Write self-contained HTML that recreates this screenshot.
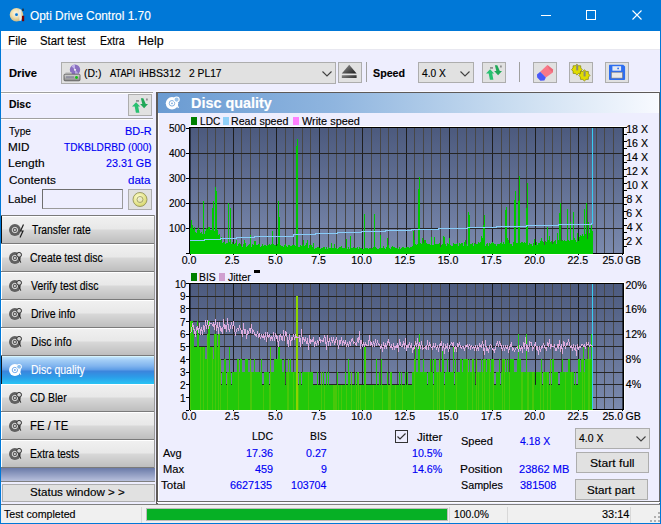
<!DOCTYPE html>
<html><head><meta charset="utf-8"><style>
html,body{margin:0;padding:0;}
body{width:661px;height:524px;overflow:hidden;position:relative;background:#EEEEFE;font-family:"Liberation Sans", sans-serif;}
.t{position:absolute;white-space:pre;line-height:1;font-family:"Liberation Sans", sans-serif;-webkit-text-stroke:0.15px currentColor;}
</style></head><body>
<div style="position:absolute;left:0px;top:0px;width:661px;height:31px;background:#0078D7"></div><svg style="position:absolute;left:6px;top:4px" width="22" height="22" viewBox="0 0 22 22">
<defs><radialGradient id="dg" cx="45%" cy="40%" r="60%"><stop offset="0" stop-color="#fffbe8"/><stop offset="0.5" stop-color="#efe0b0"/><stop offset="1" stop-color="#cdb880"/></radialGradient></defs>
<circle cx="10.5" cy="10.7" r="6.8" fill="url(#dg)"/><circle cx="10.5" cy="10.7" r="2.2" fill="#e8e4d8"/><circle cx="10.5" cy="10.7" r="1.4" fill="#0078D7"/>
<path d="M12.8 5.8L15.2 5.4L15.4 16.6L13.6 17Z" fill="#e8e8e8"/><rect x="16" y="11.8" width="2.2" height="5.4" fill="#7a0000"/><rect x="16.2" y="4.6" width="1.6" height="2.4" fill="#203040"/></svg><div class="t" style="left:29.82px;top:9.59px;transform-origin:0 0;transform:scaleX(0.9656);font-size:12.3px;color:#fff;font-weight:normal;">Opti Drive Control 1.70</div><div style="position:absolute;left:541px;top:15px;width:10px;height:1px;background:#fff"></div><div style="position:absolute;left:586px;top:10px;width:10px;height:10px;border:1px solid #fff;box-sizing:border-box"></div><svg style="position:absolute;left:632px;top:10px" width="10" height="10" viewBox="0 0 10 10"><path d="M0.5 0.5L9.5 9.5M9.5 0.5L0.5 9.5" stroke="#fff" stroke-width="1.1"/></svg><div style="position:absolute;left:0px;top:0px;width:1px;height:524px;background:#0078D7"></div><div style="position:absolute;left:660px;top:0px;width:1px;height:524px;background:#0078D7"></div><div style="position:absolute;left:0px;top:523px;width:661px;height:1px;background:#0078D7"></div><div style="position:absolute;left:1px;top:31px;width:659px;height:18px;background:#fff"></div><div class="t" style="left:7.56px;top:34.59px;transform-origin:0 0;transform:scaleX(0.9516);font-size:12.3px;color:#000;font-weight:normal;">File</div><div class="t" style="left:39.94px;top:34.59px;transform-origin:0 0;transform:scaleX(0.9251);font-size:12.3px;color:#000;font-weight:normal;">Start test</div><div class="t" style="left:99.66px;top:34.59px;transform-origin:0 0;transform:scaleX(0.8570);font-size:12.3px;color:#000;font-weight:normal;">Extra</div><div class="t" style="left:138.30px;top:34.59px;transform-origin:0 0;transform:scaleX(1.0139);font-size:12.3px;color:#000;font-weight:normal;">Help</div><div style="position:absolute;left:1px;top:49px;width:659px;height:43px;background:#EEEEFE"></div><div style="position:absolute;left:1px;top:49px;width:659px;height:1px;background:#e8e8f0"></div><div style="position:absolute;left:1px;top:91px;width:659px;height:1px;background:#f8f8ff"></div><div style="position:absolute;left:1px;top:92px;width:152px;height:1px;background:#A0A0A0"></div><div style="position:absolute;left:1px;top:93px;width:152px;height:1px;background:#fff"></div><div class="t" style="left:8.53px;top:67.77px;transform-origin:0 0;transform:scaleX(0.9721);font-size:11.5px;color:#000;font-weight:bold;">Drive</div><div style="position:absolute;left:61px;top:62px;width:275px;height:22px;background:#E1E1E1;border:1px solid #ADADAD;box-sizing:border-box"></div><svg style="position:absolute;left:62px;top:62px" width="22" height="22" viewBox="0 0 22 22">
<defs><linearGradient id="dvb" x1="0" y1="0" x2="0" y2="1"><stop offset="0" stop-color="#d8d8d8"/><stop offset="1" stop-color="#888"/></linearGradient></defs>
<circle cx="13" cy="7.8" r="5.2" fill="#8a70c0"/><path d="M13 7.8L9.5 4.2A5 5 0 0 1 13 2.6Z" fill="#c0b0e8"/><path d="M13 7.8L16.5 11.4A5 5 0 0 1 13 13Z" fill="#b8a8e0"/><circle cx="13" cy="7.8" r="1.1" fill="#f0f0f0"/>
<rect x="3.5" y="10" width="6" height="2.4" fill="#c8c8c8"/>
<rect x="2" y="12.2" width="16" height="6.6" rx="1" fill="url(#dvb)" stroke="#505050" stroke-width="0.8"/><rect x="4" y="14.2" width="8" height="2" fill="#9090a0"/><circle cx="14.5" cy="15.5" r="1.4" fill="#10c010"/></svg><div class="t" style="left:83.77px;top:68.27px;transform-origin:0 0;transform:scaleX(0.9071);font-size:11.5px;color:#000;font-weight:normal;">(D:)</div><div class="t" style="left:110.10px;top:68.27px;transform-origin:0 0;transform:scaleX(0.7996);font-size:11.5px;color:#000;font-weight:normal;">ATAPI</div><div class="t" style="left:139.07px;top:68.27px;transform-origin:0 0;transform:scaleX(0.9192);font-size:11.5px;color:#000;font-weight:normal;">iHBS312</div><div class="t" style="left:189.29px;top:68.27px;transform-origin:0 0;transform:scaleX(0.8941);font-size:11.5px;color:#000;font-weight:normal;">2 PL17</div><svg style="position:absolute;left:322px;top:71px" width="10" height="6" viewBox="0 0 10 6"><path d="M0.5 0.5L5 5L9.5 0.5" fill="none" stroke="#404040" stroke-width="1.1"/></svg><div style="position:absolute;left:338px;top:62px;width:24px;height:21px;background:#E1E1E1;border:1px solid #ADADAD;box-sizing:border-box"></div><svg style="position:absolute;left:338px;top:62px" width="24" height="21" viewBox="0 0 24 21">
<defs><linearGradient id="ej" x1="0" y1="0" x2="1" y2="1"><stop offset="0" stop-color="#9a9a9a"/><stop offset="1" stop-color="#181818"/></linearGradient></defs>
<path d="M11.2 2.7L18.6 11.6H3.8Z" fill="url(#ej)"/><rect x="3.8" y="13.1" width="14.8" height="2.8" fill="url(#ej)"/></svg><div style="position:absolute;left:366px;top:62px;width:1px;height:20px;background:#A0A0A0"></div><div class="t" style="left:372.89px;top:67.97px;transform-origin:0 0;transform:scaleX(0.9291);font-size:11.5px;color:#000;font-weight:bold;">Speed</div><div style="position:absolute;left:418px;top:62px;width:56px;height:21px;background:#E1E1E1;border:1px solid #ADADAD;box-sizing:border-box"></div><div class="t" style="left:421.90px;top:68.27px;transform-origin:0 0;transform:scaleX(0.8855);font-size:11.5px;color:#000;font-weight:normal;">4.0 X</div><svg style="position:absolute;left:460px;top:71px" width="10" height="6" viewBox="0 0 10 6"><path d="M0.5 0.5L5 5L9.5 0.5" fill="none" stroke="#404040" stroke-width="1.1"/></svg><div style="position:absolute;left:482px;top:62px;width:24px;height:21px;background:#E1E1E1;border:1px solid #ADADAD;box-sizing:border-box"></div><svg style="position:absolute;left:482px;top:62px" width="24" height="21" viewBox="0 0 24 21">
<path d="M4 11.4L8.1 7.2L12.1 11.4H10.2L11.4 17.8H7.9L6.7 11.4Z" fill="#28c070"/><path d="M12.1 9.1H14.3L12.9 3.2H15.3L17.8 9.1H20L16.1 13.3Z" fill="#20a858"/>
<rect x="8" y="5.5" width="3" height="0.9" fill="#404040"/><rect x="18.5" y="3.5" width="0.9" height="2" fill="#404040"/></svg><div style="position:absolute;left:519px;top:62px;width:1px;height:20px;background:#A0A0A0"></div><div style="position:absolute;left:533px;top:62px;width:24px;height:21px;background:#E1E1E1;border:1px solid #ADADAD;box-sizing:border-box"></div><svg style="position:absolute;left:533px;top:62px" width="24" height="21" viewBox="0 0 24 21">
<path d="M7.2 9.7L14.4 3L20.1 7.4L19.8 10.4L12.9 15.6Z" fill="#f87888"/><path d="M14.4 3L20.1 7.4L19.8 10.4L16 7Z" fill="#e05868" opacity="0.5"/>
<path d="M4 12.4L7.2 9.7L12.9 15.6L11.4 18.6L7.4 18.8L4.2 15.4Z" fill="#4a58f8"/></svg><div style="position:absolute;left:569px;top:62px;width:24px;height:21px;background:#E1E1E1;border:1px solid #ADADAD;box-sizing:border-box"></div><svg style="position:absolute;left:569px;top:62px" width="24" height="21" viewBox="0 0 24 21">
<polygon points="13.30,7.60 11.79,9.21 11.72,11.42 9.51,11.49 7.90,13.00 6.29,11.49 4.08,11.42 4.01,9.21 2.50,7.60 4.01,5.99 4.08,3.78 6.29,3.71 7.90,2.20 9.51,3.71 11.72,3.78 11.79,5.99" fill="#e0dc00" stroke="#707000" stroke-width="0.6"/><polygon points="21.00,13.40 19.44,15.07 19.36,17.36 17.07,17.44 15.40,19.00 13.73,17.44 11.44,17.36 11.36,15.07 9.80,13.40 11.36,11.73 11.44,9.44 13.73,9.36 15.40,7.80 17.07,9.36 19.36,9.44 19.44,11.73" fill="#e0dc00" stroke="#707000" stroke-width="0.6"/>
<rect x="7.2" y="3.2" width="2" height="5.2" fill="#8a8a7a"/><rect x="14.6" y="9.2" width="2" height="5.2" fill="#8a8a7a"/></svg><div style="position:absolute;left:605px;top:62px;width:24px;height:21px;background:#E1E1E1;border:1px solid #ADADAD;box-sizing:border-box"></div><svg style="position:absolute;left:605px;top:62px" width="24" height="21" viewBox="0 0 24 21">
<path d="M4.5 2.7H18.2L20.1 4.6V17Q20.1 17.9 19.2 17.9H4.9Q4 17.9 4 17V3.2Q4 2.7 4.5 2.7Z" fill="#2e6ef0"/>
<rect x="7.4" y="4.2" width="8.7" height="4.5" fill="#e4eaf4"/><circle cx="13.1" cy="6.4" r="0.9" fill="#2e6ef0"/>
<rect x="6.4" y="10.2" width="11" height="5.9" fill="#e8e8e8" stroke="#7a7a80" stroke-width="0.6"/></svg><div style="position:absolute;left:1px;top:94px;width:155px;height:410px;background:#EEEEFE"></div><div class="t" style="left:8.58px;top:99.27px;transform-origin:0 0;transform:scaleX(0.9013);font-size:11.5px;color:#000;font-weight:bold;">Disc</div><div style="position:absolute;left:128px;top:94px;width:24px;height:22px;background:#E1E1E1;border:1px solid #ADADAD;box-sizing:border-box"></div><svg style="position:absolute;left:128px;top:95px" width="24" height="21" viewBox="0 0 24 21">
<path d="M4 11.4L8.1 7.2L12.1 11.4H10.2L11.4 17.8H7.9L6.7 11.4Z" fill="#28c070"/><path d="M12.1 9.1H14.3L12.9 3.2H15.3L17.8 9.1H20L16.1 13.3Z" fill="#20a858"/>
<rect x="8" y="5.5" width="3" height="0.9" fill="#404040"/><rect x="18.5" y="3.5" width="0.9" height="2" fill="#404040"/></svg><div style="position:absolute;left:1px;top:118px;width:152px;height:1px;background:#A0A0A0"></div><div style="position:absolute;left:1px;top:119px;width:152px;height:1px;background:#fff"></div><div class="t" style="left:9.10px;top:125.87px;transform-origin:0 0;transform:scaleX(0.8771);font-size:11.5px;color:#000;font-weight:normal;">Type</div><div class="t" style="left:124.72px;top:125.87px;transform-origin:0 0;transform:scaleX(0.9511);font-size:11.5px;color:#0000f4;font-weight:normal;">BD-R</div><div class="t" style="left:8.36px;top:141.77px;transform-origin:0 0;transform:scaleX(1.0165);font-size:11.5px;color:#000;font-weight:normal;">MID</div><div class="t" style="left:63.90px;top:141.77px;transform-origin:0 0;transform:scaleX(0.8791);font-size:11.5px;color:#0000f4;font-weight:normal;">TDKBLDRBD (000)</div><div class="t" style="left:8.34px;top:158.27px;transform-origin:0 0;transform:scaleX(1.0444);font-size:11.5px;color:#000;font-weight:normal;">Length</div><div class="t" style="left:106.16px;top:158.27px;transform-origin:0 0;transform:scaleX(0.9332);font-size:11.5px;color:#0000f4;font-weight:normal;">23.31 GB</div><div class="t" style="left:8.71px;top:174.57px;transform-origin:0 0;transform:scaleX(1.0176);font-size:11.5px;color:#000;font-weight:normal;">Contents</div><div class="t" style="left:128.44px;top:174.57px;transform-origin:0 0;transform:scaleX(1.0061);font-size:11.5px;color:#0000f4;font-weight:normal;">data</div><div class="t" style="left:8.39px;top:193.87px;transform-origin:0 0;transform:scaleX(0.9923);font-size:11.5px;color:#000;font-weight:normal;">Label</div><div style="position:absolute;left:42px;top:189px;width:81px;height:20px;background:#EEEEFE;border:1px solid #6e6e6e;border-bottom-color:#9a9a9a;border-right-color:#9a9a9a;box-sizing:border-box"></div><div style="position:absolute;left:128px;top:189px;width:24px;height:21px;background:#E1E1E1;border:1px solid #ADADAD;box-sizing:border-box"></div><svg style="position:absolute;left:128px;top:189px" width="24" height="21" viewBox="0 0 24 21">
<defs><radialGradient id="cdy" cx="40%" cy="35%" r="65%"><stop offset="0" stop-color="#ffffd0"/><stop offset="1" stop-color="#d8d870"/></radialGradient></defs>
<circle cx="12" cy="10.5" r="7" fill="url(#cdy)" stroke="#8a8a50" stroke-width="0.8"/><circle cx="12" cy="10.5" r="3" fill="none" stroke="#9a9a70" stroke-width="0.9"/><circle cx="12" cy="10.5" r="1.3" fill="#e0e0e0"/></svg><div style="position:absolute;left:1px;top:215px;width:154px;height:1px;background:#7a7a7a"></div><div style="position:absolute;left:1px;top:216px;width:154px;height:1px;background:#fff"></div><div style="position:absolute;left:1px;top:217px;width:154px;height:26px;background:linear-gradient(#f0f0f0 0px,#e8e8e8 12px,#d8d8d8 13px,#bebebe 26px)"></div><div style="position:absolute;left:1px;top:216px;width:1px;height:27px;background:#101010"></div><svg style="position:absolute;left:4px;top:221px" width="22" height="18" viewBox="0 0 22 18">
<circle cx="10.9" cy="9" r="5.9" fill="#606060"/><circle cx="10.9" cy="9" r="2.7" fill="none" stroke="#e6e6e6" stroke-width="0.9"/><circle cx="10.9" cy="9" r="0.9" fill="#e6e6e6"/><path d="M19.5 3.5L16.5 10H19L16 16.5" fill="none" stroke="#202020" stroke-width="1.2"/></svg><div class="t" style="left:31.89px;top:223.89px;transform-origin:0 0;transform:scaleX(0.8389);font-size:12.3px;color:#000;font-weight:normal;">Transfer rate</div><div style="position:absolute;left:1px;top:243px;width:154px;height:1px;background:#7a7a7a"></div><div style="position:absolute;left:1px;top:244px;width:154px;height:1px;background:#fff"></div><div style="position:absolute;left:1px;top:245px;width:154px;height:26px;background:linear-gradient(#f0f0f0 0px,#e8e8e8 12px,#d8d8d8 13px,#bebebe 26px)"></div><div style="position:absolute;left:1px;top:244px;width:1px;height:27px;background:#fff"></div><svg style="position:absolute;left:4px;top:249px" width="22" height="18" viewBox="0 0 22 18">
<circle cx="10.9" cy="9" r="5.9" fill="#606060"/><circle cx="10.9" cy="9" r="2.7" fill="none" stroke="#e6e6e6" stroke-width="0.9"/><circle cx="10.9" cy="9" r="0.9" fill="#e6e6e6"/><circle cx="15.1" cy="5.8" r="2.4" fill="#d4d4d4" stroke="#303030" stroke-width="1"/><path d="M14.6 8.6L16.8 13.6" stroke="#303030" stroke-width="1.1"/></svg><div class="t" style="left:30.48px;top:251.89px;transform-origin:0 0;transform:scaleX(0.8523);font-size:12.3px;color:#000;font-weight:normal;">Create test disc</div><div style="position:absolute;left:1px;top:271px;width:154px;height:1px;background:#7a7a7a"></div><div style="position:absolute;left:1px;top:272px;width:154px;height:1px;background:#fff"></div><div style="position:absolute;left:1px;top:273px;width:154px;height:26px;background:linear-gradient(#f0f0f0 0px,#e8e8e8 12px,#d8d8d8 13px,#bebebe 26px)"></div><div style="position:absolute;left:1px;top:272px;width:1px;height:27px;background:#fff"></div><svg style="position:absolute;left:4px;top:277px" width="22" height="18" viewBox="0 0 22 18">
<circle cx="10.9" cy="9" r="5.9" fill="#606060"/><circle cx="10.9" cy="9" r="2.7" fill="none" stroke="#e6e6e6" stroke-width="0.9"/><circle cx="10.9" cy="9" r="0.9" fill="#e6e6e6"/><circle cx="15.1" cy="5.8" r="2.4" fill="#d4d4d4" stroke="#303030" stroke-width="1"/><path d="M14.6 8.6L16.8 13.6" stroke="#303030" stroke-width="1.1"/></svg><div class="t" style="left:31.00px;top:279.89px;transform-origin:0 0;transform:scaleX(0.8501);font-size:12.3px;color:#000;font-weight:normal;">Verify test disc</div><div style="position:absolute;left:1px;top:299px;width:154px;height:1px;background:#7a7a7a"></div><div style="position:absolute;left:1px;top:300px;width:154px;height:1px;background:#fff"></div><div style="position:absolute;left:1px;top:301px;width:154px;height:26px;background:linear-gradient(#f0f0f0 0px,#e8e8e8 12px,#d8d8d8 13px,#bebebe 26px)"></div><div style="position:absolute;left:1px;top:300px;width:1px;height:27px;background:#fff"></div><svg style="position:absolute;left:4px;top:305px" width="22" height="18" viewBox="0 0 22 18">
<circle cx="10.9" cy="9" r="5.9" fill="#606060"/><circle cx="10.9" cy="9" r="2.7" fill="none" stroke="#e6e6e6" stroke-width="0.9"/><circle cx="10.9" cy="9" r="0.9" fill="#e6e6e6"/><circle cx="15.1" cy="5.8" r="2.4" fill="#d4d4d4" stroke="#303030" stroke-width="1"/><path d="M14.6 8.6L16.8 13.6" stroke="#303030" stroke-width="1.1"/></svg><div class="t" style="left:30.86px;top:307.89px;transform-origin:0 0;transform:scaleX(0.8551);font-size:12.3px;color:#000;font-weight:normal;">Drive info</div><div style="position:absolute;left:1px;top:327px;width:154px;height:1px;background:#7a7a7a"></div><div style="position:absolute;left:1px;top:328px;width:154px;height:1px;background:#fff"></div><div style="position:absolute;left:1px;top:329px;width:154px;height:26px;background:linear-gradient(#f0f0f0 0px,#e8e8e8 12px,#d8d8d8 13px,#bebebe 26px)"></div><div style="position:absolute;left:1px;top:328px;width:1px;height:27px;background:#fff"></div><svg style="position:absolute;left:4px;top:333px" width="22" height="18" viewBox="0 0 22 18">
<circle cx="10.9" cy="9" r="5.9" fill="#606060"/><circle cx="10.9" cy="9" r="2.7" fill="none" stroke="#e6e6e6" stroke-width="0.9"/><circle cx="10.9" cy="9" r="0.9" fill="#e6e6e6"/><circle cx="15.1" cy="5.8" r="2.4" fill="#d4d4d4" stroke="#303030" stroke-width="1"/><path d="M14.6 8.6L16.8 13.6" stroke="#303030" stroke-width="1.1"/></svg><div class="t" style="left:30.65px;top:335.89px;transform-origin:0 0;transform:scaleX(0.8593);font-size:12.3px;color:#000;font-weight:normal;">Disc info</div><div style="position:absolute;left:1px;top:355px;width:154px;height:1px;background:#7a7a7a"></div><div style="position:absolute;left:1px;top:356px;width:154px;height:1px;background:#d8f4fc"></div><div style="position:absolute;left:1px;top:357px;width:154px;height:27px;background:linear-gradient(#c0e4fc 0px,#a4cef6 3px,#80b4ee 9px,#5c9ce6 13px,#3c84dc 14px,#2c9ce8 20px,#28c4f4 27px)"></div><div style="position:absolute;left:1px;top:356px;width:1px;height:28px;background:#101820"></div><svg style="position:absolute;left:4px;top:361px" width="22" height="18" viewBox="0 0 22 18">
<circle cx="10.9" cy="9" r="5.9" fill="#ffffff"/><circle cx="10.9" cy="9" r="2.7" fill="none" stroke="#6aa6ea" stroke-width="0.9"/><circle cx="10.9" cy="9" r="0.9" fill="#6aa6ea"/><circle cx="15.1" cy="5.8" r="2.4" fill="#8cc0f0" stroke="#ffffff" stroke-width="1"/><path d="M14.6 8.6L16.8 13.6" stroke="#ffffff" stroke-width="1.1"/></svg><div class="t" style="left:30.66px;top:363.89px;transform-origin:0 0;transform:scaleX(0.8562);font-size:12.3px;color:#fff;font-weight:normal;">Disc quality</div><div style="position:absolute;left:1px;top:384px;width:154px;height:1px;background:#fff"></div><div style="position:absolute;left:1px;top:385px;width:154px;height:26px;background:linear-gradient(#f0f0f0 0px,#e8e8e8 12px,#d8d8d8 13px,#bebebe 26px)"></div><div style="position:absolute;left:1px;top:384px;width:1px;height:27px;background:#fff"></div><svg style="position:absolute;left:4px;top:389px" width="22" height="18" viewBox="0 0 22 18">
<circle cx="10.9" cy="9" r="5.9" fill="#606060"/><circle cx="10.9" cy="9" r="2.7" fill="none" stroke="#e6e6e6" stroke-width="0.9"/><circle cx="10.9" cy="9" r="0.9" fill="#e6e6e6"/><circle cx="15.1" cy="5.8" r="2.4" fill="#d4d4d4" stroke="#303030" stroke-width="1"/><path d="M14.6 8.6L16.8 13.6" stroke="#303030" stroke-width="1.1"/></svg><div class="t" style="left:30.18px;top:391.89px;transform-origin:0 0;transform:scaleX(0.8514);font-size:12.3px;color:#000;font-weight:normal;">CD Bler</div><div style="position:absolute;left:1px;top:411px;width:154px;height:1px;background:#7a7a7a"></div><div style="position:absolute;left:1px;top:412px;width:154px;height:1px;background:#fff"></div><div style="position:absolute;left:1px;top:413px;width:154px;height:26px;background:linear-gradient(#f0f0f0 0px,#e8e8e8 12px,#d8d8d8 13px,#bebebe 26px)"></div><div style="position:absolute;left:1px;top:412px;width:1px;height:27px;background:#fff"></div><svg style="position:absolute;left:4px;top:417px" width="22" height="18" viewBox="0 0 22 18">
<circle cx="10.9" cy="9" r="5.9" fill="#606060"/><circle cx="10.9" cy="9" r="2.7" fill="none" stroke="#e6e6e6" stroke-width="0.9"/><circle cx="10.9" cy="9" r="0.9" fill="#e6e6e6"/><circle cx="15.1" cy="5.8" r="2.4" fill="#d4d4d4" stroke="#303030" stroke-width="1"/><path d="M14.6 8.6L16.8 13.6" stroke="#303030" stroke-width="1.1"/></svg><div class="t" style="left:30.39px;top:419.89px;transform-origin:0 0;transform:scaleX(0.9243);font-size:12.3px;color:#000;font-weight:normal;">FE / TE</div><div style="position:absolute;left:1px;top:439px;width:154px;height:1px;background:#7a7a7a"></div><div style="position:absolute;left:1px;top:440px;width:154px;height:1px;background:#fff"></div><div style="position:absolute;left:1px;top:441px;width:154px;height:26px;background:linear-gradient(#f0f0f0 0px,#e8e8e8 12px,#d8d8d8 13px,#bebebe 26px)"></div><div style="position:absolute;left:1px;top:440px;width:1px;height:27px;background:#fff"></div><svg style="position:absolute;left:4px;top:445px" width="22" height="18" viewBox="0 0 22 18">
<circle cx="10.9" cy="9" r="5.9" fill="#606060"/><circle cx="10.9" cy="9" r="2.7" fill="none" stroke="#e6e6e6" stroke-width="0.9"/><circle cx="10.9" cy="9" r="0.9" fill="#e6e6e6"/><circle cx="15.1" cy="5.8" r="2.4" fill="#d4d4d4" stroke="#303030" stroke-width="1"/><path d="M14.6 8.6L16.8 13.6" stroke="#303030" stroke-width="1.1"/></svg><div class="t" style="left:30.47px;top:447.89px;transform-origin:0 0;transform:scaleX(0.8458);font-size:12.3px;color:#000;font-weight:normal;">Extra tests</div><div style="position:absolute;left:1px;top:467px;width:154px;height:1px;background:#7a7a7a"></div><div style="position:absolute;left:1px;top:468px;width:154px;height:13px;background:linear-gradient(#6a7aa8,#b8c0dc)"></div><div style="position:absolute;left:1px;top:481px;width:154px;height:1px;background:#808080"></div><div style="position:absolute;left:2px;top:484px;width:153px;height:18px;background:#E1E1E1;border:1px solid #ADADAD;box-sizing:border-box"></div><div class="t" style="left:29.84px;top:487.27px;transform-origin:0 0;transform:scaleX(1.0096);font-size:11.5px;color:#000;font-weight:normal;">Status window &gt; &gt;</div><div style="position:absolute;left:154px;top:215px;width:1px;height:253px;background:#9a9a9a"></div><div style="position:absolute;left:158px;top:93px;width:502px;height:411px;background:#EEEEFE"></div><div style="position:absolute;left:156px;top:92px;width:504px;height:1px;background:#5e5a58"></div><div style="position:absolute;left:156px;top:92px;width:2px;height:412px;background:#5e5a58"></div><div style="position:absolute;left:158px;top:113px;width:1px;height:388px;background:#ffffff"></div><div style="position:absolute;left:158px;top:93px;width:500px;height:20px;background:linear-gradient(90deg,#6a9bd2 0%,#8fb5df 35%,#c8dcf0 70%,#f8faff 100%)"></div><div style="position:absolute;left:659px;top:92px;width:1px;height:412px;background:#6a6a6a"></div><div style="position:absolute;left:658px;top:93px;width:1px;height:20px;background:#ffffff"></div><svg style="position:absolute;left:162px;top:94px" width="22" height="18" viewBox="0 0 22 18">
<circle cx="10" cy="9.3" r="6.2" fill="#ffffff"/><circle cx="10" cy="9.3" r="2.8" fill="none" stroke="#7aaadc" stroke-width="0.9"/><circle cx="10" cy="9.3" r="0.9" fill="#7aaadc"/>
<circle cx="14.6" cy="5.6" r="2.6" fill="#9cc4ea" stroke="#ffffff" stroke-width="1.1"/><path d="M14 8.6L16.4 14" stroke="#ffffff" stroke-width="1.2"/></svg><div class="t" style="left:190.84px;top:96.15px;transform-origin:0 0;transform:scaleX(1.0284);font-size:14px;color:#fff;font-weight:bold;">Disc quality</div><div style="position:absolute;left:157px;top:501px;width:503px;height:1px;background:#6a6a6a"></div><div style="position:absolute;left:157px;top:502px;width:503px;height:1px;background:#fff"></div><div style="position:absolute;left:1px;top:504px;width:659px;height:1px;background:#808080"></div><svg style="position:absolute;left:0;top:0" width="661" height="524" viewBox="0 0 661 524" shape-rendering="crispEdges"><defs>
<linearGradient id="pg1" x1="0" y1="0" x2="0" y2="1"><stop offset="0" stop-color="#4c5a7e"/><stop offset="1" stop-color="#7b8aae"/></linearGradient>
<linearGradient id="pg2" x1="0" y1="0" x2="0" y2="1"><stop offset="0" stop-color="#4a5778"/><stop offset="1" stop-color="#7a89ab"/></linearGradient>
</defs><rect x="189" y="126" width="436" height="1" fill="#ffffff"/><rect x="189" y="254" width="436" height="1" fill="#ffffff"/><rect x="624" y="127" width="1" height="127" fill="#ffffff"/><rect x="190" y="128" width="433" height="125" fill="url(#pg1)"/><rect x="198" y="128" width="1" height="125" fill="#474747"/><rect x="207" y="128" width="1" height="125" fill="#474747"/><rect x="215" y="128" width="1" height="125" fill="#474747"/><rect x="224" y="128" width="1" height="125" fill="#474747"/><rect x="233" y="128" width="1" height="125" fill="#1e1e1e"/><rect x="241" y="128" width="1" height="125" fill="#474747"/><rect x="250" y="128" width="1" height="125" fill="#474747"/><rect x="259" y="128" width="1" height="125" fill="#474747"/><rect x="267" y="128" width="1" height="125" fill="#474747"/><rect x="276" y="128" width="1" height="125" fill="#1e1e1e"/><rect x="285" y="128" width="1" height="125" fill="#474747"/><rect x="293" y="128" width="1" height="125" fill="#474747"/><rect x="302" y="128" width="1" height="125" fill="#474747"/><rect x="310" y="128" width="1" height="125" fill="#474747"/><rect x="319" y="128" width="1" height="125" fill="#1e1e1e"/><rect x="328" y="128" width="1" height="125" fill="#474747"/><rect x="336" y="128" width="1" height="125" fill="#474747"/><rect x="345" y="128" width="1" height="125" fill="#474747"/><rect x="354" y="128" width="1" height="125" fill="#474747"/><rect x="362" y="128" width="1" height="125" fill="#1e1e1e"/><rect x="371" y="128" width="1" height="125" fill="#474747"/><rect x="380" y="128" width="1" height="125" fill="#474747"/><rect x="388" y="128" width="1" height="125" fill="#474747"/><rect x="397" y="128" width="1" height="125" fill="#474747"/><rect x="406" y="128" width="1" height="125" fill="#1e1e1e"/><rect x="414" y="128" width="1" height="125" fill="#474747"/><rect x="423" y="128" width="1" height="125" fill="#474747"/><rect x="431" y="128" width="1" height="125" fill="#474747"/><rect x="440" y="128" width="1" height="125" fill="#474747"/><rect x="449" y="128" width="1" height="125" fill="#1e1e1e"/><rect x="457" y="128" width="1" height="125" fill="#474747"/><rect x="466" y="128" width="1" height="125" fill="#474747"/><rect x="475" y="128" width="1" height="125" fill="#474747"/><rect x="483" y="128" width="1" height="125" fill="#474747"/><rect x="492" y="128" width="1" height="125" fill="#1e1e1e"/><rect x="501" y="128" width="1" height="125" fill="#474747"/><rect x="509" y="128" width="1" height="125" fill="#474747"/><rect x="518" y="128" width="1" height="125" fill="#474747"/><rect x="526" y="128" width="1" height="125" fill="#474747"/><rect x="535" y="128" width="1" height="125" fill="#1e1e1e"/><rect x="544" y="128" width="1" height="125" fill="#474747"/><rect x="552" y="128" width="1" height="125" fill="#474747"/><rect x="561" y="128" width="1" height="125" fill="#474747"/><rect x="570" y="128" width="1" height="125" fill="#474747"/><rect x="578" y="128" width="1" height="125" fill="#1e1e1e"/><rect x="587" y="128" width="1" height="125" fill="#474747"/><rect x="596" y="128" width="1" height="125" fill="#474747"/><rect x="604" y="128" width="1" height="125" fill="#474747"/><rect x="613" y="128" width="1" height="125" fill="#474747"/><rect x="190" y="228" width="433" height="1" fill="#252525"/><rect x="190" y="203" width="433" height="1" fill="#252525"/><rect x="190" y="178" width="433" height="1" fill="#252525"/><rect x="190" y="153" width="433" height="1" fill="#252525"/><rect x="189" y="127" width="435" height="1" fill="#000"/><rect x="189" y="253" width="435" height="1" fill="#000"/><rect x="189" y="127" width="1" height="127" fill="#000"/><rect x="190" y="127" width="1" height="127" fill="#000" fill-opacity="0.55"/><rect x="623" y="127" width="1" height="127" fill="#000"/><rect x="622" y="127" width="1" height="127" fill="#000" fill-opacity="0.55"/><rect x="186" y="253" width="3" height="1" fill="#000"/><rect x="186" y="228" width="3" height="1" fill="#000"/><rect x="186" y="203" width="3" height="1" fill="#000"/><rect x="186" y="178" width="3" height="1" fill="#000"/><rect x="186" y="153" width="3" height="1" fill="#000"/><rect x="186" y="128" width="3" height="1" fill="#000"/><rect x="624" y="246" width="3" height="1" fill="#000"/><rect x="624" y="239" width="3" height="1" fill="#000"/><rect x="624" y="232" width="3" height="1" fill="#000"/><rect x="624" y="225" width="3" height="1" fill="#000"/><rect x="624" y="218" width="3" height="1" fill="#000"/><rect x="624" y="211" width="3" height="1" fill="#000"/><rect x="624" y="204" width="3" height="1" fill="#000"/><rect x="624" y="197" width="3" height="1" fill="#000"/><rect x="624" y="190" width="3" height="1" fill="#000"/><rect x="624" y="183" width="3" height="1" fill="#000"/><rect x="624" y="176" width="3" height="1" fill="#000"/><rect x="624" y="169" width="3" height="1" fill="#000"/><rect x="624" y="162" width="3" height="1" fill="#000"/><rect x="624" y="155" width="3" height="1" fill="#000"/><rect x="624" y="148" width="3" height="1" fill="#000"/><rect x="624" y="141" width="3" height="1" fill="#000"/><rect x="624" y="134" width="3" height="1" fill="#000"/><rect x="624" y="127" width="3" height="1" fill="#000"/><path d="M190 228.3V254h1V228.3ZM191 219.9V254h1V219.9ZM192 224.9V254h1V224.9ZM193 228.5V254h1V228.5ZM194 227.2V254h1V227.2ZM195 231.6V254h1V231.6ZM196 232.7V254h1V232.7ZM197 229.6V254h1V229.6ZM198 228.2V254h1V228.2ZM199 230.1V254h1V230.1ZM200 232.8V254h1V232.8ZM201 231.6V254h1V231.6ZM202 234.0V254h1V234.0ZM203 201.0V254h1V201.0ZM204 234.3V254h1V234.3ZM205 230.9V254h1V230.9ZM206 228.0V254h1V228.0ZM207 229.0V254h1V229.0ZM208 226.7V254h1V226.7ZM209 227.4V254h1V227.4ZM210 230.2V254h1V230.2ZM211 230.2V254h1V230.2ZM212 208.0V254h1V208.0ZM213 201.0V254h1V201.0ZM214 230.8V254h1V230.8ZM215 187.0V254h1V187.0ZM216 191.0V254h1V191.0ZM217 230.3V254h1V230.3ZM218 234.6V254h1V234.6ZM219 233.5V254h1V233.5ZM220 238.6V254h1V238.6ZM221 236.5V254h1V236.5ZM222 243.3V254h1V243.3ZM223 241.8V254h1V241.8ZM224 241.8V254h1V241.8ZM225 244.0V254h1V244.0ZM226 242.7V254h1V242.7ZM227 243.1V254h1V243.1ZM228 203.0V254h1V203.0ZM229 241.5V254h1V241.5ZM230 208.0V254h1V208.0ZM231 243.6V254h1V243.6ZM232 242.2V254h1V242.2ZM233 244.2V254h1V244.2ZM234 244.0V254h1V244.0ZM235 242.9V254h1V242.9ZM236 240.3V254h1V240.3ZM237 245.9V254h1V245.9ZM238 244.0V254h1V244.0ZM239 242.7V254h1V242.7ZM240 243.7V254h1V243.7ZM241 245.8V254h1V245.8ZM242 246.5V254h1V246.5ZM243 243.5V254h1V243.5ZM244 240.0V254h1V240.0ZM245 243.4V254h1V243.4ZM246 246.8V254h1V246.8ZM247 246.3V254h1V246.3ZM248 244.9V254h1V244.9ZM249 244.2V254h1V244.2ZM250 235.0V254h1V235.0ZM251 246.6V254h1V246.6ZM252 243.8V254h1V243.8ZM253 245.0V254h1V245.0ZM254 240.9V254h1V240.9ZM255 241.4V254h1V241.4ZM256 244.9V254h1V244.9ZM257 245.4V254h1V245.4ZM258 243.9V254h1V243.9ZM259 244.4V254h1V244.4ZM260 247.2V254h1V247.2ZM261 245.7V254h1V245.7ZM262 244.4V254h1V244.4ZM263 245.8V254h1V245.8ZM264 244.9V254h1V244.9ZM265 245.2V254h1V245.2ZM266 245.7V254h1V245.7ZM267 244.5V254h1V244.5ZM268 244.5V254h1V244.5ZM269 244.4V254h1V244.4ZM270 245.3V254h1V245.3ZM271 244.2V254h1V244.2ZM272 231.0V254h1V231.0ZM273 244.3V254h1V244.3ZM274 244.8V254h1V244.8ZM275 244.9V254h1V244.9ZM276 245.9V254h1V245.9ZM277 244.1V254h1V244.1ZM278 201.0V254h1V201.0ZM279 217.0V254h1V217.0ZM280 245.2V254h1V245.2ZM281 245.9V254h1V245.9ZM282 246.0V254h1V246.0ZM283 247.0V254h1V247.0ZM284 245.2V254h1V245.2ZM285 244.4V254h1V244.4ZM286 246.1V254h1V246.1ZM287 247.4V254h1V247.4ZM288 244.5V254h1V244.5ZM289 245.3V254h1V245.3ZM290 245.6V254h1V245.6ZM291 245.8V254h1V245.8ZM292 244.7V254h1V244.7ZM293 244.6V254h1V244.6ZM294 245.1V254h1V245.1ZM295 246.0V254h1V246.0ZM296 146.0V254h1V146.0ZM297 139.0V254h1V139.0ZM298 247.3V254h1V247.3ZM299 247.3V254h1V247.3ZM300 245.1V254h1V245.1ZM301 245.7V254h1V245.7ZM302 244.5V254h1V244.5ZM303 239.8V254h1V239.8ZM304 246.2V254h1V246.2ZM305 245.3V254h1V245.3ZM306 242.6V254h1V242.6ZM307 240.0V254h1V240.0ZM308 247.7V254h1V247.7ZM309 245.2V254h1V245.2ZM310 245.2V254h1V245.2ZM311 244.9V254h1V244.9ZM312 247.4V254h1V247.4ZM313 243.2V254h1V243.2ZM314 249.2V254h1V249.2ZM315 247.9V254h1V247.9ZM316 247.7V254h1V247.7ZM317 247.4V254h1V247.4ZM318 247.4V254h1V247.4ZM319 248.3V254h1V248.3ZM320 249.1V254h1V249.1ZM321 247.6V254h1V247.6ZM322 247.9V254h1V247.9ZM323 247.3V254h1V247.3ZM324 247.2V254h1V247.2ZM325 248.9V254h1V248.9ZM326 247.3V254h1V247.3ZM327 248.9V254h1V248.9ZM328 247.1V254h1V247.1ZM329 247.7V254h1V247.7ZM330 248.0V254h1V248.0ZM331 243.0V254h1V243.0ZM332 248.3V254h1V248.3ZM333 247.7V254h1V247.7ZM334 244.1V254h1V244.1ZM335 248.3V254h1V248.3ZM336 248.2V254h1V248.2ZM337 249.2V254h1V249.2ZM338 247.7V254h1V247.7ZM339 247.3V254h1V247.3ZM340 247.2V254h1V247.2ZM341 245.6V254h1V245.6ZM342 247.7V254h1V247.7ZM343 247.5V254h1V247.5ZM344 247.7V254h1V247.7ZM345 247.7V254h1V247.7ZM346 239.0V254h1V239.0ZM347 248.9V254h1V248.9ZM348 247.2V254h1V247.2ZM349 249.0V254h1V249.0ZM350 235.6V254h1V235.6ZM351 248.3V254h1V248.3ZM352 247.7V254h1V247.7ZM353 247.4V254h1V247.4ZM354 247.8V254h1V247.8ZM355 248.3V254h1V248.3ZM356 247.9V254h1V247.9ZM357 247.2V254h1V247.2ZM358 249.1V254h1V249.1ZM359 247.4V254h1V247.4ZM360 247.8V254h1V247.8ZM361 248.1V254h1V248.1ZM362 248.9V254h1V248.9ZM363 249.2V254h1V249.2ZM364 214.0V254h1V214.0ZM365 247.9V254h1V247.9ZM366 248.2V254h1V248.2ZM367 248.2V254h1V248.2ZM368 249.0V254h1V249.0ZM369 247.8V254h1V247.8ZM370 247.9V254h1V247.9ZM371 249.0V254h1V249.0ZM372 247.6V254h1V247.6ZM373 247.3V254h1V247.3ZM374 213.5V254h1V213.5ZM375 247.4V254h1V247.4ZM376 248.0V254h1V248.0ZM377 248.8V254h1V248.8ZM378 249.2V254h1V249.2ZM379 247.5V254h1V247.5ZM380 235.0V254h1V235.0ZM381 247.8V254h1V247.8ZM382 248.2V254h1V248.2ZM383 245.6V254h1V245.6ZM384 247.5V254h1V247.5ZM385 249.1V254h1V249.1ZM386 247.4V254h1V247.4ZM387 238.0V254h1V238.0ZM388 244.7V254h1V244.7ZM389 247.7V254h1V247.7ZM390 249.2V254h1V249.2ZM391 247.3V254h1V247.3ZM392 246.0V254h1V246.0ZM393 247.2V254h1V247.2ZM394 247.4V254h1V247.4ZM395 247.8V254h1V247.8ZM396 247.8V254h1V247.8ZM397 248.4V254h1V248.4ZM398 249.1V254h1V249.1ZM399 247.4V254h1V247.4ZM400 249.1V254h1V249.1ZM401 248.4V254h1V248.4ZM402 247.4V254h1V247.4ZM403 247.3V254h1V247.3ZM404 247.9V254h1V247.9ZM405 247.7V254h1V247.7ZM406 247.4V254h1V247.4ZM407 247.2V254h1V247.2ZM408 247.4V254h1V247.4ZM409 247.9V254h1V247.9ZM410 247.3V254h1V247.3ZM411 247.4V254h1V247.4ZM412 246.0V254h1V246.0ZM413 231.0V254h1V231.0ZM414 239.7V254h1V239.7ZM415 243.7V254h1V243.7ZM416 244.6V254h1V244.6ZM417 243.6V254h1V243.6ZM418 189.0V254h1V189.0ZM419 176.6V254h1V176.6ZM420 242.8V254h1V242.8ZM421 243.5V254h1V243.5ZM422 238.4V254h1V238.4ZM423 243.4V254h1V243.4ZM424 240.3V254h1V240.3ZM425 240.0V254h1V240.0ZM426 243.0V254h1V243.0ZM427 243.9V254h1V243.9ZM428 243.7V254h1V243.7ZM429 243.5V254h1V243.5ZM430 244.8V254h1V244.8ZM431 236.8V254h1V236.8ZM432 244.6V254h1V244.6ZM433 244.5V254h1V244.5ZM434 236.7V254h1V236.7ZM435 244.0V254h1V244.0ZM436 243.6V254h1V243.6ZM437 244.3V254h1V244.3ZM438 243.6V254h1V243.6ZM439 243.3V254h1V243.3ZM440 246.5V254h1V246.5ZM441 244.5V254h1V244.5ZM442 244.0V254h1V244.0ZM443 236.3V254h1V236.3ZM444 236.7V254h1V236.7ZM445 243.9V254h1V243.9ZM446 246.0V254h1V246.0ZM447 242.7V254h1V242.7ZM448 243.7V254h1V243.7ZM449 238.0V254h1V238.0ZM450 244.5V254h1V244.5ZM451 246.4V254h1V246.4ZM452 246.0V254h1V246.0ZM453 243.2V254h1V243.2ZM454 244.2V254h1V244.2ZM455 243.8V254h1V243.8ZM456 243.5V254h1V243.5ZM457 242.6V254h1V242.6ZM458 245.6V254h1V245.6ZM459 242.9V254h1V242.9ZM460 243.9V254h1V243.9ZM461 243.1V254h1V243.1ZM462 243.3V254h1V243.3ZM463 246.1V254h1V246.1ZM464 242.4V254h1V242.4ZM465 240.4V254h1V240.4ZM466 244.0V254h1V244.0ZM467 245.8V254h1V245.8ZM468 212.0V254h1V212.0ZM469 215.0V254h1V215.0ZM470 243.8V254h1V243.8ZM471 244.1V254h1V244.1ZM472 242.9V254h1V242.9ZM473 245.5V254h1V245.5ZM474 243.1V254h1V243.1ZM475 244.1V254h1V244.1ZM476 244.0V254h1V244.0ZM477 243.7V254h1V243.7ZM478 242.3V254h1V242.3ZM479 243.3V254h1V243.3ZM480 242.4V254h1V242.4ZM481 236.3V254h1V236.3ZM482 237.7V254h1V237.7ZM483 225.0V254h1V225.0ZM484 215.0V254h1V215.0ZM485 245.6V254h1V245.6ZM486 244.3V254h1V244.3ZM487 242.8V254h1V242.8ZM488 245.9V254h1V245.9ZM489 242.8V254h1V242.8ZM490 244.2V254h1V244.2ZM491 243.1V254h1V243.1ZM492 242.2V254h1V242.2ZM493 243.4V254h1V243.4ZM494 243.7V254h1V243.7ZM495 243.5V254h1V243.5ZM496 245.8V254h1V245.8ZM497 243.5V254h1V243.5ZM498 243.5V254h1V243.5ZM499 243.9V254h1V243.9ZM500 242.5V254h1V242.5ZM501 242.4V254h1V242.4ZM502 243.9V254h1V243.9ZM503 242.3V254h1V242.3ZM504 244.3V254h1V244.3ZM505 210.0V254h1V210.0ZM506 207.0V254h1V207.0ZM507 237.5V254h1V237.5ZM508 239.7V254h1V239.7ZM509 242.5V254h1V242.5ZM510 244.1V254h1V244.1ZM511 243.9V254h1V243.9ZM512 245.8V254h1V245.8ZM513 242.4V254h1V242.4ZM514 200.0V254h1V200.0ZM515 191.0V254h1V191.0ZM516 242.6V254h1V242.6ZM517 242.9V254h1V242.9ZM518 201.0V254h1V201.0ZM519 176.0V254h1V176.0ZM520 242.6V254h1V242.6ZM521 242.2V254h1V242.2ZM522 242.0V254h1V242.0ZM523 242.5V254h1V242.5ZM524 242.3V254h1V242.3ZM525 243.0V254h1V243.0ZM526 208.0V254h1V208.0ZM527 183.0V254h1V183.0ZM528 245.3V254h1V245.3ZM529 243.2V254h1V243.2ZM530 243.7V254h1V243.7ZM531 243.5V254h1V243.5ZM532 245.6V254h1V245.6ZM533 242.6V254h1V242.6ZM534 238.7V254h1V238.7ZM535 245.3V254h1V245.3ZM536 241.8V254h1V241.8ZM537 245.2V254h1V245.2ZM538 243.1V254h1V243.1ZM539 242.7V254h1V242.7ZM540 241.4V254h1V241.4ZM541 238.0V254h1V238.0ZM542 241.0V254h1V241.0ZM543 242.0V254h1V242.0ZM544 245.3V254h1V245.3ZM545 240.8V254h1V240.8ZM546 242.2V254h1V242.2ZM547 227.2V254h1V227.2ZM548 240.4V254h1V240.4ZM549 235.5V254h1V235.5ZM550 241.9V254h1V241.9ZM551 240.8V254h1V240.8ZM552 244.4V254h1V244.4ZM553 241.9V254h1V241.9ZM554 241.1V254h1V241.1ZM555 239.6V254h1V239.6ZM556 243.6V254h1V243.6ZM557 233.0V254h1V233.0ZM558 239.7V254h1V239.7ZM559 212.8V254h1V212.8ZM560 203.2V254h1V203.2ZM561 240.5V254h1V240.5ZM562 240.0V254h1V240.0ZM563 240.7V254h1V240.7ZM564 240.2V254h1V240.2ZM565 241.1V254h1V241.1ZM566 240.6V254h1V240.6ZM567 209.0V254h1V209.0ZM568 240.0V254h1V240.0ZM569 240.7V254h1V240.7ZM570 222.0V254h1V222.0ZM571 239.5V254h1V239.5ZM572 240.2V254h1V240.2ZM573 212.0V254h1V212.0ZM574 237.5V254h1V237.5ZM575 240.2V254h1V240.2ZM576 241.6V254h1V241.6ZM577 232.6V254h1V232.6ZM578 240.6V254h1V240.6ZM579 237.0V254h1V237.0ZM580 235.3V254h1V235.3ZM581 235.9V254h1V235.9ZM582 234.2V254h1V234.2ZM583 235.9V254h1V235.9ZM584 209.0V254h1V209.0ZM585 233.7V254h1V233.7ZM586 203.0V254h1V203.0ZM587 238.7V254h1V238.7ZM588 222.0V254h1V222.0ZM589 233.2V254h1V233.2ZM590 229.2V254h1V229.2ZM591 223.0V254h1V223.0ZM592 231.4V254h1V231.4Z" fill="#00c800" shape-rendering="crispEdges"/><path d="M190 240.8H204.3V239.4H220V238.2H236.4V237.4H254.6V236.4H293V234.6H315V233.6H337V232.5H361V231.2H385.5V230.6H411V229.6H438V228.8H467V227.8H496V226.8H526V225.9H558V224.9H591V223.6H592" fill="none" stroke="#88ccf8" stroke-width="1" shape-rendering="crispEdges"/><rect x="592" y="128" width="1" height="96" fill="#38cdf0"/><rect x="189" y="282" width="436" height="1" fill="#ffffff"/><rect x="189" y="410" width="436" height="1" fill="#ffffff"/><rect x="624" y="283" width="1" height="127" fill="#ffffff"/><rect x="190" y="284" width="433" height="125" fill="url(#pg1)"/><rect x="198" y="284" width="1" height="125" fill="#474747"/><rect x="207" y="284" width="1" height="125" fill="#474747"/><rect x="215" y="284" width="1" height="125" fill="#474747"/><rect x="224" y="284" width="1" height="125" fill="#474747"/><rect x="233" y="284" width="1" height="125" fill="#1e1e1e"/><rect x="241" y="284" width="1" height="125" fill="#474747"/><rect x="250" y="284" width="1" height="125" fill="#474747"/><rect x="259" y="284" width="1" height="125" fill="#474747"/><rect x="267" y="284" width="1" height="125" fill="#474747"/><rect x="276" y="284" width="1" height="125" fill="#1e1e1e"/><rect x="285" y="284" width="1" height="125" fill="#474747"/><rect x="293" y="284" width="1" height="125" fill="#474747"/><rect x="302" y="284" width="1" height="125" fill="#474747"/><rect x="310" y="284" width="1" height="125" fill="#474747"/><rect x="319" y="284" width="1" height="125" fill="#1e1e1e"/><rect x="328" y="284" width="1" height="125" fill="#474747"/><rect x="336" y="284" width="1" height="125" fill="#474747"/><rect x="345" y="284" width="1" height="125" fill="#474747"/><rect x="354" y="284" width="1" height="125" fill="#474747"/><rect x="362" y="284" width="1" height="125" fill="#1e1e1e"/><rect x="371" y="284" width="1" height="125" fill="#474747"/><rect x="380" y="284" width="1" height="125" fill="#474747"/><rect x="388" y="284" width="1" height="125" fill="#474747"/><rect x="397" y="284" width="1" height="125" fill="#474747"/><rect x="406" y="284" width="1" height="125" fill="#1e1e1e"/><rect x="414" y="284" width="1" height="125" fill="#474747"/><rect x="423" y="284" width="1" height="125" fill="#474747"/><rect x="431" y="284" width="1" height="125" fill="#474747"/><rect x="440" y="284" width="1" height="125" fill="#474747"/><rect x="449" y="284" width="1" height="125" fill="#1e1e1e"/><rect x="457" y="284" width="1" height="125" fill="#474747"/><rect x="466" y="284" width="1" height="125" fill="#474747"/><rect x="475" y="284" width="1" height="125" fill="#474747"/><rect x="483" y="284" width="1" height="125" fill="#474747"/><rect x="492" y="284" width="1" height="125" fill="#1e1e1e"/><rect x="501" y="284" width="1" height="125" fill="#474747"/><rect x="509" y="284" width="1" height="125" fill="#474747"/><rect x="518" y="284" width="1" height="125" fill="#474747"/><rect x="526" y="284" width="1" height="125" fill="#474747"/><rect x="535" y="284" width="1" height="125" fill="#1e1e1e"/><rect x="544" y="284" width="1" height="125" fill="#474747"/><rect x="552" y="284" width="1" height="125" fill="#474747"/><rect x="561" y="284" width="1" height="125" fill="#474747"/><rect x="570" y="284" width="1" height="125" fill="#474747"/><rect x="578" y="284" width="1" height="125" fill="#1e1e1e"/><rect x="587" y="284" width="1" height="125" fill="#474747"/><rect x="596" y="284" width="1" height="125" fill="#474747"/><rect x="604" y="284" width="1" height="125" fill="#474747"/><rect x="613" y="284" width="1" height="125" fill="#474747"/><rect x="190" y="397" width="433" height="1" fill="#252525"/><rect x="190" y="384" width="433" height="1" fill="#252525"/><rect x="190" y="372" width="433" height="1" fill="#252525"/><rect x="190" y="359" width="433" height="1" fill="#252525"/><rect x="190" y="346" width="433" height="1" fill="#252525"/><rect x="190" y="334" width="433" height="1" fill="#252525"/><rect x="190" y="321" width="433" height="1" fill="#252525"/><rect x="190" y="308" width="433" height="1" fill="#252525"/><rect x="190" y="296" width="433" height="1" fill="#252525"/><rect x="189" y="283" width="435" height="1" fill="#000"/><rect x="189" y="409" width="435" height="1" fill="#000"/><rect x="189" y="283" width="1" height="127" fill="#000"/><rect x="190" y="283" width="1" height="127" fill="#000" fill-opacity="0.55"/><rect x="623" y="283" width="1" height="127" fill="#000"/><rect x="622" y="283" width="1" height="127" fill="#000" fill-opacity="0.55"/><rect x="186" y="410" width="3" height="1" fill="#000"/><rect x="186" y="397" width="3" height="1" fill="#000"/><rect x="186" y="384" width="3" height="1" fill="#000"/><rect x="186" y="372" width="3" height="1" fill="#000"/><rect x="186" y="359" width="3" height="1" fill="#000"/><rect x="186" y="346" width="3" height="1" fill="#000"/><rect x="186" y="334" width="3" height="1" fill="#000"/><rect x="186" y="321" width="3" height="1" fill="#000"/><rect x="186" y="308" width="3" height="1" fill="#000"/><rect x="186" y="296" width="3" height="1" fill="#000"/><rect x="186" y="283" width="3" height="1" fill="#000"/><path d="M191 321.4V410h1V321.4ZM192 321.4V410h1V321.4ZM193 334.0V410h1V334.0ZM194 346.7V410h1V346.7ZM195 346.7V410h1V346.7ZM196 346.7V410h1V346.7ZM197 321.4V410h1V321.4ZM198 334.0V410h1V334.0ZM199 346.7V410h1V346.7ZM201 346.7V410h1V346.7ZM202 346.7V410h1V346.7ZM204 346.7V410h1V346.7ZM205 359.4V410h1V359.4ZM206 359.4V410h1V359.4ZM208 321.4V410h1V321.4ZM209 321.4V410h1V321.4ZM210 346.7V410h1V346.7ZM211 346.7V410h1V346.7ZM213 359.4V410h1V359.4ZM214 334.0V410h1V334.0ZM216 334.0V410h1V334.0ZM217 346.7V410h1V346.7ZM219 334.0V410h1V334.0ZM221 384.7V410h1V384.7ZM222 372.0V410h1V372.0ZM223 372.0V410h1V372.0ZM224 359.4V410h1V359.4ZM225 359.4V410h1V359.4ZM226 384.7V410h1V384.7ZM228 372.0V410h1V372.0ZM229 346.7V410h1V346.7ZM230 372.0V410h1V372.0ZM231 384.7V410h1V384.7ZM232 372.0V410h1V372.0ZM233 372.0V410h1V372.0ZM234 372.0V410h1V372.0ZM235 372.0V410h1V372.0ZM236 372.0V410h1V372.0ZM237 359.4V410h1V359.4ZM239 372.0V410h1V372.0ZM240 359.4V410h1V359.4ZM241 359.4V410h1V359.4ZM242 372.0V410h1V372.0ZM243 372.0V410h1V372.0ZM244 372.0V410h1V372.0ZM245 359.4V410h1V359.4ZM246 359.4V410h1V359.4ZM247 359.4V410h1V359.4ZM248 372.0V410h1V372.0ZM249 372.0V410h1V372.0ZM252 372.0V410h1V372.0ZM253 372.0V410h1V372.0ZM254 359.4V410h1V359.4ZM255 372.0V410h1V372.0ZM256 372.0V410h1V372.0ZM257 372.0V410h1V372.0ZM258 372.0V410h1V372.0ZM259 372.0V410h1V372.0ZM260 372.0V410h1V372.0ZM261 359.4V410h1V359.4ZM262 384.7V410h1V384.7ZM264 372.0V410h1V372.0ZM265 372.0V410h1V372.0ZM266 372.0V410h1V372.0ZM267 372.0V410h1V372.0ZM268 372.0V410h1V372.0ZM271 372.0V410h1V372.0ZM272 372.0V410h1V372.0ZM273 372.0V410h1V372.0ZM274 359.4V410h1V359.4ZM275 359.4V410h1V359.4ZM276 359.4V410h1V359.4ZM277 359.4V410h1V359.4ZM278 346.7V410h1V346.7ZM279 346.7V410h1V346.7ZM280 359.4V410h1V359.4ZM281 359.4V410h1V359.4ZM282 372.0V410h1V372.0ZM283 372.0V410h1V372.0ZM284 359.4V410h1V359.4ZM285 384.7V410h1V384.7ZM286 372.0V410h1V372.0ZM289 372.0V410h1V372.0ZM290 359.4V410h1V359.4ZM291 372.0V410h1V372.0ZM292 372.0V410h1V372.0ZM294 372.0V410h1V372.0ZM295 372.0V410h1V372.0ZM296 296.1V410h1V296.1ZM299 372.0V410h1V372.0ZM300 372.0V410h1V372.0ZM301 384.7V410h1V384.7ZM302 372.0V410h1V372.0ZM303 372.0V410h1V372.0ZM304 372.0V410h1V372.0ZM305 372.0V410h1V372.0ZM306 372.0V410h1V372.0ZM307 372.0V410h1V372.0ZM309 372.0V410h1V372.0ZM310 372.0V410h1V372.0ZM311 372.0V410h1V372.0ZM312 372.0V410h1V372.0ZM313 384.7V410h1V384.7ZM314 384.7V410h1V384.7ZM315 384.7V410h1V384.7ZM316 384.7V410h1V384.7ZM317 372.0V410h1V372.0ZM318 384.7V410h1V384.7ZM319 384.7V410h1V384.7ZM320 384.7V410h1V384.7ZM322 384.7V410h1V384.7ZM323 372.0V410h1V372.0ZM325 384.7V410h1V384.7ZM326 372.0V410h1V372.0ZM327 384.7V410h1V384.7ZM328 372.0V410h1V372.0ZM329 384.7V410h1V384.7ZM330 384.7V410h1V384.7ZM331 384.7V410h1V384.7ZM332 384.7V410h1V384.7ZM337 372.0V410h1V372.0ZM339 384.7V410h1V384.7ZM340 384.7V410h1V384.7ZM342 384.7V410h1V384.7ZM343 384.7V410h1V384.7ZM344 384.7V410h1V384.7ZM345 372.0V410h1V372.0ZM347 384.7V410h1V384.7ZM348 359.4V410h1V359.4ZM349 372.0V410h1V372.0ZM350 384.7V410h1V384.7ZM352 384.7V410h1V384.7ZM353 384.7V410h1V384.7ZM354 384.7V410h1V384.7ZM355 372.0V410h1V372.0ZM357 372.0V410h1V372.0ZM359 384.7V410h1V384.7ZM361 384.7V410h1V384.7ZM362 384.7V410h1V384.7ZM363 384.7V410h1V384.7ZM364 346.7V410h1V346.7ZM366 384.7V410h1V384.7ZM367 384.7V410h1V384.7ZM368 384.7V410h1V384.7ZM369 384.7V410h1V384.7ZM370 384.7V410h1V384.7ZM371 384.7V410h1V384.7ZM372 384.7V410h1V384.7ZM374 384.7V410h1V384.7ZM375 384.7V410h1V384.7ZM376 359.4V410h1V359.4ZM377 384.7V410h1V384.7ZM378 384.7V410h1V384.7ZM379 372.0V410h1V372.0ZM380 384.7V410h1V384.7ZM381 359.4V410h1V359.4ZM383 384.7V410h1V384.7ZM384 384.7V410h1V384.7ZM385 384.7V410h1V384.7ZM386 384.7V410h1V384.7ZM387 372.0V410h1V372.0ZM391 372.0V410h1V372.0ZM392 384.7V410h1V384.7ZM393 384.7V410h1V384.7ZM394 384.7V410h1V384.7ZM396 384.7V410h1V384.7ZM397 384.7V410h1V384.7ZM398 384.7V410h1V384.7ZM399 372.0V410h1V372.0ZM400 384.7V410h1V384.7ZM401 372.0V410h1V372.0ZM403 384.7V410h1V384.7ZM404 384.7V410h1V384.7ZM405 372.0V410h1V372.0ZM406 384.7V410h1V384.7ZM407 372.0V410h1V372.0ZM408 384.7V410h1V384.7ZM409 384.7V410h1V384.7ZM410 384.7V410h1V384.7ZM411 384.7V410h1V384.7ZM412 372.0V410h1V372.0ZM413 372.0V410h1V372.0ZM415 346.7V410h1V346.7ZM416 372.0V410h1V372.0ZM417 372.0V410h1V372.0ZM418 346.7V410h1V346.7ZM419 334.0V410h1V334.0ZM420 372.0V410h1V372.0ZM421 372.0V410h1V372.0ZM422 372.0V410h1V372.0ZM423 359.4V410h1V359.4ZM424 372.0V410h1V372.0ZM425 372.0V410h1V372.0ZM426 372.0V410h1V372.0ZM427 384.7V410h1V384.7ZM428 372.0V410h1V372.0ZM429 372.0V410h1V372.0ZM430 359.4V410h1V359.4ZM431 372.0V410h1V372.0ZM432 359.4V410h1V359.4ZM434 359.4V410h1V359.4ZM435 359.4V410h1V359.4ZM436 372.0V410h1V372.0ZM438 372.0V410h1V372.0ZM440 372.0V410h1V372.0ZM441 372.0V410h1V372.0ZM442 346.7V410h1V346.7ZM443 359.4V410h1V359.4ZM445 372.0V410h1V372.0ZM446 372.0V410h1V372.0ZM447 359.4V410h1V359.4ZM448 372.0V410h1V372.0ZM449 372.0V410h1V372.0ZM450 372.0V410h1V372.0ZM451 372.0V410h1V372.0ZM452 372.0V410h1V372.0ZM453 346.7V410h1V346.7ZM454 384.7V410h1V384.7ZM455 359.4V410h1V359.4ZM457 372.0V410h1V372.0ZM458 372.0V410h1V372.0ZM459 372.0V410h1V372.0ZM460 359.4V410h1V359.4ZM461 359.4V410h1V359.4ZM462 372.0V410h1V372.0ZM463 359.4V410h1V359.4ZM464 359.4V410h1V359.4ZM465 359.4V410h1V359.4ZM466 359.4V410h1V359.4ZM468 372.0V410h1V372.0ZM469 359.4V410h1V359.4ZM470 372.0V410h1V372.0ZM471 372.0V410h1V372.0ZM473 359.4V410h1V359.4ZM474 372.0V410h1V372.0ZM475 384.7V410h1V384.7ZM477 372.0V410h1V372.0ZM479 372.0V410h1V372.0ZM480 372.0V410h1V372.0ZM481 359.4V410h1V359.4ZM483 359.4V410h1V359.4ZM485 359.4V410h1V359.4ZM486 372.0V410h1V372.0ZM487 359.4V410h1V359.4ZM488 359.4V410h1V359.4ZM490 372.0V410h1V372.0ZM491 359.4V410h1V359.4ZM492 359.4V410h1V359.4ZM494 384.7V410h1V384.7ZM495 384.7V410h1V384.7ZM496 372.0V410h1V372.0ZM497 372.0V410h1V372.0ZM498 372.0V410h1V372.0ZM499 359.4V410h1V359.4ZM500 384.7V410h1V384.7ZM501 372.0V410h1V372.0ZM503 359.4V410h1V359.4ZM505 372.0V410h1V372.0ZM506 359.4V410h1V359.4ZM507 372.0V410h1V372.0ZM508 359.4V410h1V359.4ZM510 359.4V410h1V359.4ZM511 359.4V410h1V359.4ZM512 359.4V410h1V359.4ZM513 359.4V410h1V359.4ZM514 372.0V410h1V372.0ZM515 372.0V410h1V372.0ZM516 372.0V410h1V372.0ZM517 359.4V410h1V359.4ZM518 334.0V410h1V334.0ZM519 359.4V410h1V359.4ZM520 359.4V410h1V359.4ZM523 372.0V410h1V372.0ZM524 372.0V410h1V372.0ZM525 372.0V410h1V372.0ZM526 334.0V410h1V334.0ZM529 372.0V410h1V372.0ZM530 372.0V410h1V372.0ZM531 372.0V410h1V372.0ZM534 372.0V410h1V372.0ZM535 384.7V410h1V384.7ZM536 372.0V410h1V372.0ZM537 372.0V410h1V372.0ZM538 372.0V410h1V372.0ZM539 372.0V410h1V372.0ZM541 359.4V410h1V359.4ZM542 384.7V410h1V384.7ZM544 372.0V410h1V372.0ZM545 372.0V410h1V372.0ZM546 372.0V410h1V372.0ZM548 372.0V410h1V372.0ZM549 384.7V410h1V384.7ZM551 384.7V410h1V384.7ZM552 359.4V410h1V359.4ZM553 359.4V410h1V359.4ZM554 372.0V410h1V372.0ZM555 372.0V410h1V372.0ZM556 372.0V410h1V372.0ZM557 372.0V410h1V372.0ZM558 384.7V410h1V384.7ZM559 384.7V410h1V384.7ZM560 372.0V410h1V372.0ZM561 372.0V410h1V372.0ZM562 359.4V410h1V359.4ZM563 372.0V410h1V372.0ZM564 372.0V410h1V372.0ZM566 372.0V410h1V372.0ZM567 372.0V410h1V372.0ZM568 359.4V410h1V359.4ZM569 359.4V410h1V359.4ZM570 372.0V410h1V372.0ZM572 372.0V410h1V372.0ZM573 372.0V410h1V372.0ZM574 384.7V410h1V384.7ZM575 372.0V410h1V372.0ZM576 384.7V410h1V384.7ZM577 384.7V410h1V384.7ZM578 359.4V410h1V359.4ZM579 359.4V410h1V359.4ZM580 372.0V410h1V372.0ZM581 359.4V410h1V359.4ZM583 346.7V410h1V346.7ZM585 359.4V410h1V359.4ZM586 359.4V410h1V359.4ZM587 359.4V410h1V359.4ZM590 359.4V410h1V359.4ZM591 334.0V410h1V334.0Z" fill="#22c80a"/><path d="M190 321.4V410h1V321.4ZM200 346.7V410h1V346.7ZM203 346.7V410h1V346.7ZM207 334.0V410h1V334.0ZM212 346.7V410h1V346.7ZM215 334.0V410h1V334.0ZM218 334.0V410h1V334.0ZM220 359.4V410h1V359.4ZM227 372.0V410h1V372.0ZM238 359.4V410h1V359.4ZM250 359.4V410h1V359.4ZM251 372.0V410h1V372.0ZM263 384.7V410h1V384.7ZM269 384.7V410h1V384.7ZM270 346.7V410h1V346.7ZM287 372.0V410h1V372.0ZM288 359.4V410h1V359.4ZM293 372.0V410h1V372.0ZM297 359.4V410h1V359.4ZM298 384.7V410h1V384.7ZM308 372.0V410h1V372.0ZM321 372.0V410h1V372.0ZM324 384.7V410h1V384.7ZM333 384.7V410h1V384.7ZM334 384.7V410h1V384.7ZM335 384.7V410h1V384.7ZM336 384.7V410h1V384.7ZM338 384.7V410h1V384.7ZM341 384.7V410h1V384.7ZM346 384.7V410h1V384.7ZM351 372.0V410h1V372.0ZM356 384.7V410h1V384.7ZM358 372.0V410h1V372.0ZM360 384.7V410h1V384.7ZM365 346.7V410h1V346.7ZM373 384.7V410h1V384.7ZM382 384.7V410h1V384.7ZM388 384.7V410h1V384.7ZM389 384.7V410h1V384.7ZM390 372.0V410h1V372.0ZM395 384.7V410h1V384.7ZM402 384.7V410h1V384.7ZM414 359.4V410h1V359.4ZM433 384.7V410h1V384.7ZM437 372.0V410h1V372.0ZM439 359.4V410h1V359.4ZM444 384.7V410h1V384.7ZM456 372.0V410h1V372.0ZM467 359.4V410h1V359.4ZM472 359.4V410h1V359.4ZM476 359.4V410h1V359.4ZM478 372.0V410h1V372.0ZM482 372.0V410h1V372.0ZM484 359.4V410h1V359.4ZM489 359.4V410h1V359.4ZM493 359.4V410h1V359.4ZM502 359.4V410h1V359.4ZM504 359.4V410h1V359.4ZM509 372.0V410h1V372.0ZM521 372.0V410h1V372.0ZM522 372.0V410h1V372.0ZM527 372.0V410h1V372.0ZM528 372.0V410h1V372.0ZM532 372.0V410h1V372.0ZM533 372.0V410h1V372.0ZM540 372.0V410h1V372.0ZM543 372.0V410h1V372.0ZM547 372.0V410h1V372.0ZM550 359.4V410h1V359.4ZM565 372.0V410h1V372.0ZM571 372.0V410h1V372.0ZM582 359.4V410h1V359.4ZM584 372.0V410h1V372.0ZM588 346.7V410h1V346.7ZM589 359.4V410h1V359.4ZM592 359.4V410h1V359.4Z" fill="#48c80a"/><rect x="296" y="296.1" width="2" height="113.9" fill="#8cd400"/><rect x="592" y="284" width="1" height="125" fill="#38cdf0"/><polyline points="190.5,333.0 191.5,330.5 192.5,324.3 193.5,326.0 194.5,332.8 195.5,335.2 196.5,327.7 197.5,326.5 198.5,333.4 199.5,323.0 200.5,334.9 201.5,326.7 202.5,335.3 203.5,325.2 204.5,332.3 205.5,320.4 206.5,329.4 207.5,319.9 208.5,328.9 209.5,323.0 210.5,323.9 211.5,323.3 212.5,325.2 213.5,323.2 214.5,330.3 215.5,318.9 216.5,331.2 217.5,321.9 218.5,333.7 219.5,321.6 220.5,330.0 221.5,328.7 222.5,334.4 223.5,319.3 224.5,329.0 225.5,326.1 226.5,331.5 227.5,318.2 228.5,328.6 229.5,331.0 230.5,327.7 231.5,321.7 232.5,329.0 233.5,321.5 234.5,329.8 235.5,333.6 236.5,329.7 237.5,328.5 238.5,329.8 239.5,326.7 240.5,329.8 241.5,330.3 242.5,337.4 243.5,322.8 244.5,334.1 245.5,329.1 246.5,338.6 247.5,331.2 248.5,332.9 249.5,329.4 250.5,332.7 251.5,324.4 252.5,334.3 253.5,329.8 254.5,334.2 255.5,334.2 256.5,337.2 257.5,331.3 258.5,336.9 259.5,334.1 260.5,339.1 261.5,335.5 262.5,337.4 263.5,335.4 264.5,339.9 265.5,332.3 266.5,341.5 267.5,332.1 268.5,338.0 269.5,334.0 270.5,340.8 271.5,336.6 272.5,341.0 273.5,332.4 274.5,340.9 275.5,332.9 276.5,338.0 277.5,336.5 278.5,347.2 279.5,335.5 280.5,334.8 281.5,338.2 282.5,340.9 283.5,330.5 284.5,340.7 285.5,332.0 286.5,332.7 287.5,340.9 288.5,346.8 289.5,333.6 290.5,346.3 291.5,336.9 292.5,340.3 293.5,333.8 294.5,340.3 295.5,335.3 296.5,337.7 297.5,337.7 298.5,337.7 299.5,336.2 300.5,347.1 301.5,328.6 302.5,343.6 303.5,337.0 304.5,340.4 305.5,337.4 306.5,344.3 307.5,338.0 308.5,350.3 309.5,335.3 310.5,342.8 311.5,340.6 312.5,341.7 313.5,337.3 314.5,346.6 315.5,341.2 316.5,345.8 317.5,339.8 318.5,345.1 319.5,336.6 320.5,342.3 321.5,340.4 322.5,341.1 323.5,341.4 324.5,335.1 325.5,338.6 326.5,349.7 327.5,335.2 328.5,345.7 329.5,337.7 330.5,346.0 331.5,337.3 332.5,343.0 333.5,337.2 334.5,344.8 335.5,340.4 336.5,338.5 337.5,340.9 338.5,349.4 339.5,341.3 340.5,343.3 341.5,337.0 342.5,345.5 343.5,340.3 344.5,345.2 345.5,340.0 346.5,347.4 347.5,341.9 348.5,345.7 349.5,342.6 350.5,345.8 351.5,339.1 352.5,338.5 353.5,343.3 354.5,342.8 355.5,343.4 356.5,346.2 357.5,338.3 358.5,343.2 359.5,331.0 360.5,348.6 361.5,340.5 362.5,347.0 363.5,343.5 364.5,345.8 365.5,343.5 366.5,345.5 367.5,345.5 368.5,345.1 369.5,335.4 370.5,345.7 371.5,343.2 372.5,347.0 373.5,341.2 374.5,344.9 375.5,341.0 376.5,344.6 377.5,341.7 378.5,344.2 379.5,344.8 380.5,347.4 381.5,344.4 382.5,351.6 383.5,341.8 384.5,347.4 385.5,344.5 386.5,348.9 387.5,342.1 388.5,340.1 389.5,344.9 390.5,347.2 391.5,345.3 392.5,349.9 393.5,343.5 394.5,348.7 395.5,346.4 396.5,347.0 397.5,343.3 398.5,351.7 399.5,339.0 400.5,345.5 401.5,346.5 402.5,346.9 403.5,341.0 404.5,348.6 405.5,338.3 406.5,350.5 407.5,345.8 408.5,347.4 409.5,341.6 410.5,347.8 411.5,343.3 412.5,352.6 413.5,348.0 414.5,348.4 415.5,341.5 416.5,347.2 417.5,338.3 418.5,349.2 419.5,341.9 420.5,349.0 421.5,341.0 422.5,349.4 423.5,348.7 424.5,347.1 425.5,346.6 426.5,350.2 427.5,339.8 428.5,350.3 429.5,341.7 430.5,346.5 431.5,347.1 432.5,348.7 433.5,344.6 434.5,346.9 435.5,344.7 436.5,349.8 437.5,344.7 438.5,351.8 439.5,344.5 440.5,345.6 441.5,340.6 442.5,351.3 443.5,343.2 444.5,353.5 445.5,345.3 446.5,347.2 447.5,344.8 448.5,352.3 449.5,345.8 450.5,344.5 451.5,342.9 452.5,345.1 453.5,342.2 454.5,352.1 455.5,346.5 456.5,352.0 457.5,342.7 458.5,345.5 459.5,342.1 460.5,347.4 461.5,348.5 462.5,346.2 463.5,346.6 464.5,350.5 465.5,345.4 466.5,346.2 467.5,345.2 468.5,348.5 469.5,343.6 470.5,348.5 471.5,346.0 472.5,348.2 473.5,346.7 474.5,349.6 475.5,345.3 476.5,351.1 477.5,347.1 478.5,350.7 479.5,342.7 480.5,346.8 481.5,347.4 482.5,341.0 483.5,347.0 484.5,355.3 485.5,340.2 486.5,351.2 487.5,347.8 488.5,353.0 489.5,346.2 490.5,344.5 491.5,346.2 492.5,349.1 493.5,349.2 494.5,352.4 495.5,346.9 496.5,345.4 497.5,340.9 498.5,346.8 499.5,341.1 500.5,345.5 501.5,345.6 502.5,351.4 503.5,345.4 504.5,351.1 505.5,346.0 506.5,347.9 507.5,346.3 508.5,351.2 509.5,348.3 510.5,344.7 511.5,343.3 512.5,350.0 513.5,348.9 514.5,351.2 515.5,348.1 516.5,347.5 517.5,346.7 518.5,352.0 519.5,345.3 520.5,350.8 521.5,345.9 522.5,352.7 523.5,341.8 524.5,349.2 525.5,337.4 526.5,350.5 527.5,344.7 528.5,352.3 529.5,341.9 530.5,342.7 531.5,342.6 532.5,350.0 533.5,347.8 534.5,346.3 535.5,342.5 536.5,349.8 537.5,345.7 538.5,355.2 539.5,345.8 540.5,351.6 541.5,346.2 542.5,347.0 543.5,342.8 544.5,347.7 545.5,347.4 546.5,350.9 547.5,342.3 548.5,346.9 549.5,338.9 550.5,348.5 551.5,345.0 552.5,346.5 553.5,346.4 554.5,345.0 555.5,350.8 556.5,350.7 557.5,345.7 558.5,348.7 559.5,340.3 560.5,351.9 561.5,343.7 562.5,353.8 563.5,341.7 564.5,342.9 565.5,349.1 566.5,343.7 567.5,344.3 568.5,339.2 569.5,344.4 570.5,347.4 571.5,345.7 572.5,349.1 573.5,345.8 574.5,350.4 575.5,345.4 576.5,355.5 577.5,343.9 578.5,350.3 579.5,346.4 580.5,347.2 581.5,344.2 582.5,344.7 583.5,345.9 584.5,344.9 585.5,348.8 586.5,343.1 587.5,344.5 588.5,343.2 589.5,346.1 590.5,344.9 591.5,345.1 592.5,346.7" fill="none" stroke="#dcaadc" stroke-width="1" shape-rendering="crispEdges"/><rect x="190" y="254" width="1" height="1" fill="#000"/><rect x="190" y="410" width="1" height="1" fill="#000"/><rect x="233" y="254" width="1" height="1" fill="#000"/><rect x="233" y="410" width="1" height="1" fill="#000"/><rect x="276" y="254" width="1" height="1" fill="#000"/><rect x="276" y="410" width="1" height="1" fill="#000"/><rect x="319" y="254" width="1" height="1" fill="#000"/><rect x="319" y="410" width="1" height="1" fill="#000"/><rect x="362" y="254" width="1" height="1" fill="#000"/><rect x="362" y="410" width="1" height="1" fill="#000"/><rect x="406" y="254" width="1" height="1" fill="#000"/><rect x="406" y="410" width="1" height="1" fill="#000"/><rect x="449" y="254" width="1" height="1" fill="#000"/><rect x="449" y="410" width="1" height="1" fill="#000"/><rect x="492" y="254" width="1" height="1" fill="#000"/><rect x="492" y="410" width="1" height="1" fill="#000"/><rect x="535" y="254" width="1" height="1" fill="#000"/><rect x="535" y="410" width="1" height="1" fill="#000"/><rect x="578" y="254" width="1" height="1" fill="#000"/><rect x="578" y="410" width="1" height="1" fill="#000"/><rect x="622" y="254" width="1" height="1" fill="#000"/><rect x="622" y="410" width="1" height="1" fill="#000"/></svg><div style="position:absolute;left:191px;top:117px;width:6px;height:8px;background:#008000"></div><div class="t" style="left:199.69px;top:115.69px;transform-origin:0 0;transform:scaleX(0.9195);font-size:11px;color:#000;font-weight:normal;">LDC</div><div style="position:absolute;left:223px;top:117px;width:6px;height:8px;background:#90d0f8"></div><div class="t" style="left:231.45px;top:115.69px;transform-origin:0 0;transform:scaleX(0.9667);font-size:11px;color:#000;font-weight:normal;">Read speed</div><div style="position:absolute;left:293px;top:117px;width:6px;height:8px;background:#ff80ff"></div><div class="t" style="left:302.30px;top:115.69px;transform-origin:0 0;transform:scaleX(0.9884);font-size:11px;color:#000;font-weight:normal;">Write speed</div><div style="position:absolute;left:191px;top:273px;width:6px;height:8px;background:#008000"></div><div class="t" style="left:199.07px;top:271.69px;transform-origin:0 0;transform:scaleX(0.9426);font-size:11px;color:#000;font-weight:normal;">BIS</div><div style="position:absolute;left:219px;top:273px;width:6px;height:8px;background:#d0a0d0"></div><div class="t" style="left:228.10px;top:271.69px;transform-origin:0 0;transform:scaleX(0.9540);font-size:11px;color:#000;font-weight:normal;">Jitter</div><div style="position:absolute;left:254px;top:270px;width:6px;height:3px;background:#000"></div><div class="t" style="left:169.18px;top:223.97px;transform-origin:0 0;transform:scaleX(0.9800);font-size:10.2px;color:#000;font-weight:normal;">100</div><div class="t" style="left:169.18px;top:198.97px;transform-origin:0 0;transform:scaleX(0.9800);font-size:10.2px;color:#000;font-weight:normal;">200</div><div class="t" style="left:169.18px;top:173.97px;transform-origin:0 0;transform:scaleX(0.9800);font-size:10.2px;color:#000;font-weight:normal;">300</div><div class="t" style="left:169.18px;top:148.97px;transform-origin:0 0;transform:scaleX(0.9800);font-size:10.2px;color:#000;font-weight:normal;">400</div><div class="t" style="left:169.18px;top:123.97px;transform-origin:0 0;transform:scaleX(0.9800);font-size:10.2px;color:#000;font-weight:normal;">500</div><div class="t" style="left:626.37px;top:235.73px;transform-origin:0 0;transform:scaleX(1.0000);font-size:10.6px;color:#000;font-weight:normal;">2 X</div><div class="t" style="left:626.69px;top:221.73px;transform-origin:0 0;transform:scaleX(1.0000);font-size:10.6px;color:#000;font-weight:normal;">4 X</div><div class="t" style="left:626.37px;top:207.73px;transform-origin:0 0;transform:scaleX(1.0000);font-size:10.6px;color:#000;font-weight:normal;">6 X</div><div class="t" style="left:626.48px;top:193.73px;transform-origin:0 0;transform:scaleX(1.0000);font-size:10.6px;color:#000;font-weight:normal;">8 X</div><div class="t" style="left:626.16px;top:179.73px;transform-origin:0 0;transform:scaleX(1.0000);font-size:10.6px;color:#000;font-weight:normal;">10 X</div><div class="t" style="left:626.16px;top:165.73px;transform-origin:0 0;transform:scaleX(1.0000);font-size:10.6px;color:#000;font-weight:normal;">12 X</div><div class="t" style="left:626.16px;top:151.73px;transform-origin:0 0;transform:scaleX(1.0000);font-size:10.6px;color:#000;font-weight:normal;">14 X</div><div class="t" style="left:626.16px;top:137.73px;transform-origin:0 0;transform:scaleX(1.0000);font-size:10.6px;color:#000;font-weight:normal;">16 X</div><div class="t" style="left:626.16px;top:123.73px;transform-origin:0 0;transform:scaleX(1.0000);font-size:10.6px;color:#000;font-weight:normal;">18 X</div><div class="t" style="left:181.66px;top:254.93px;transform-origin:0 0;transform:scaleX(1.0000);font-size:10.6px;color:#000;font-weight:normal;">0.0</div><div class="t" style="left:181.66px;top:410.93px;transform-origin:0 0;transform:scaleX(1.0000);font-size:10.6px;color:#000;font-weight:normal;">0.0</div><div class="t" style="left:224.76px;top:254.93px;transform-origin:0 0;transform:scaleX(1.0000);font-size:10.6px;color:#000;font-weight:normal;">2.5</div><div class="t" style="left:224.76px;top:410.93px;transform-origin:0 0;transform:scaleX(1.0000);font-size:10.6px;color:#000;font-weight:normal;">2.5</div><div class="t" style="left:268.01px;top:254.93px;transform-origin:0 0;transform:scaleX(1.0000);font-size:10.6px;color:#000;font-weight:normal;">5.0</div><div class="t" style="left:268.01px;top:410.93px;transform-origin:0 0;transform:scaleX(1.0000);font-size:10.6px;color:#000;font-weight:normal;">5.0</div><div class="t" style="left:311.16px;top:254.93px;transform-origin:0 0;transform:scaleX(1.0000);font-size:10.6px;color:#000;font-weight:normal;">7.5</div><div class="t" style="left:311.16px;top:410.93px;transform-origin:0 0;transform:scaleX(1.0000);font-size:10.6px;color:#000;font-weight:normal;">7.5</div><div class="t" style="left:351.31px;top:254.93px;transform-origin:0 0;transform:scaleX(1.0000);font-size:10.6px;color:#000;font-weight:normal;">10.0</div><div class="t" style="left:351.31px;top:410.93px;transform-origin:0 0;transform:scaleX(1.0000);font-size:10.6px;color:#000;font-weight:normal;">10.0</div><div class="t" style="left:394.51px;top:254.93px;transform-origin:0 0;transform:scaleX(1.0000);font-size:10.6px;color:#000;font-weight:normal;">12.5</div><div class="t" style="left:394.51px;top:410.93px;transform-origin:0 0;transform:scaleX(1.0000);font-size:10.6px;color:#000;font-weight:normal;">12.5</div><div class="t" style="left:437.71px;top:254.93px;transform-origin:0 0;transform:scaleX(1.0000);font-size:10.6px;color:#000;font-weight:normal;">15.0</div><div class="t" style="left:437.71px;top:410.93px;transform-origin:0 0;transform:scaleX(1.0000);font-size:10.6px;color:#000;font-weight:normal;">15.0</div><div class="t" style="left:480.91px;top:254.93px;transform-origin:0 0;transform:scaleX(1.0000);font-size:10.6px;color:#000;font-weight:normal;">17.5</div><div class="t" style="left:480.91px;top:410.93px;transform-origin:0 0;transform:scaleX(1.0000);font-size:10.6px;color:#000;font-weight:normal;">17.5</div><div class="t" style="left:524.21px;top:254.93px;transform-origin:0 0;transform:scaleX(1.0000);font-size:10.6px;color:#000;font-weight:normal;">20.0</div><div class="t" style="left:524.21px;top:410.93px;transform-origin:0 0;transform:scaleX(1.0000);font-size:10.6px;color:#000;font-weight:normal;">20.0</div><div class="t" style="left:567.41px;top:254.93px;transform-origin:0 0;transform:scaleX(1.0000);font-size:10.6px;color:#000;font-weight:normal;">22.5</div><div class="t" style="left:567.41px;top:410.93px;transform-origin:0 0;transform:scaleX(1.0000);font-size:10.6px;color:#000;font-weight:normal;">22.5</div><div class="t" style="left:602.45px;top:254.93px;transform-origin:0 0;transform:scaleX(1.0000);font-size:10.6px;color:#000;font-weight:normal;">25.0</div><div class="t" style="left:602.45px;top:410.93px;transform-origin:0 0;transform:scaleX(1.0000);font-size:10.6px;color:#000;font-weight:normal;">25.0</div><div class="t" style="left:625.47px;top:254.93px;transform-origin:0 0;transform:scaleX(1.0000);font-size:10.6px;color:#000;font-weight:normal;">GB</div><div class="t" style="left:625.47px;top:410.93px;transform-origin:0 0;transform:scaleX(1.0000);font-size:10.6px;color:#000;font-weight:normal;">GB</div><div class="t" style="left:180.40px;top:393.61px;transform-origin:0 0;transform:scaleX(0.9800);font-size:10.2px;color:#000;font-weight:normal;">1</div><div class="t" style="left:180.40px;top:380.95px;transform-origin:0 0;transform:scaleX(0.9800);font-size:10.2px;color:#000;font-weight:normal;">2</div><div class="t" style="left:180.30px;top:368.29px;transform-origin:0 0;transform:scaleX(0.9800);font-size:10.2px;color:#000;font-weight:normal;">3</div><div class="t" style="left:180.20px;top:355.63px;transform-origin:0 0;transform:scaleX(0.9800);font-size:10.2px;color:#000;font-weight:normal;">4</div><div class="t" style="left:180.30px;top:342.97px;transform-origin:0 0;transform:scaleX(0.9800);font-size:10.2px;color:#000;font-weight:normal;">5</div><div class="t" style="left:180.30px;top:330.31px;transform-origin:0 0;transform:scaleX(0.9800);font-size:10.2px;color:#000;font-weight:normal;">6</div><div class="t" style="left:180.40px;top:317.65px;transform-origin:0 0;transform:scaleX(0.9800);font-size:10.2px;color:#000;font-weight:normal;">7</div><div class="t" style="left:180.30px;top:304.99px;transform-origin:0 0;transform:scaleX(0.9800);font-size:10.2px;color:#000;font-weight:normal;">8</div><div class="t" style="left:180.40px;top:292.33px;transform-origin:0 0;transform:scaleX(0.9800);font-size:10.2px;color:#000;font-weight:normal;">9</div><div class="t" style="left:174.74px;top:279.67px;transform-origin:0 0;transform:scaleX(0.9800);font-size:10.2px;color:#000;font-weight:normal;">10</div><div class="t" style="left:625.79px;top:378.53px;transform-origin:0 0;transform:scaleX(1.0000);font-size:10.6px;color:#000;font-weight:normal;">4%</div><div class="t" style="left:625.58px;top:353.78px;transform-origin:0 0;transform:scaleX(1.0000);font-size:10.6px;color:#000;font-weight:normal;">8%</div><div class="t" style="left:625.26px;top:329.03px;transform-origin:0 0;transform:scaleX(1.0000);font-size:10.6px;color:#000;font-weight:normal;">12%</div><div class="t" style="left:625.26px;top:304.28px;transform-origin:0 0;transform:scaleX(1.0000);font-size:10.6px;color:#000;font-weight:normal;">16%</div><div class="t" style="left:625.47px;top:279.53px;transform-origin:0 0;transform:scaleX(1.0000);font-size:10.6px;color:#000;font-weight:normal;">20%</div><div class="t" style="left:251.66px;top:431.23px;transform-origin:0 0;transform:scaleX(0.9326);font-size:11.3px;color:#000;font-weight:normal;">LDC</div><div class="t" style="left:309.87px;top:431.23px;transform-origin:0 0;transform:scaleX(0.9176);font-size:11.3px;color:#000;font-weight:normal;">BIS</div><div class="t" style="left:163.30px;top:448.23px;transform-origin:0 0;transform:scaleX(0.9714);font-size:11.3px;color:#000;font-weight:normal;">Avg</div><div class="t" style="left:162.81px;top:464.23px;transform-origin:0 0;transform:scaleX(0.9837);font-size:11.3px;color:#000;font-weight:normal;">Max</div><div class="t" style="left:160.77px;top:480.23px;transform-origin:0 0;transform:scaleX(1.0244);font-size:11.3px;color:#000;font-weight:normal;">Total</div><div class="t" style="left:245.85px;top:448.23px;transform-origin:0 0;transform:scaleX(0.9528);font-size:11.3px;color:#0000f4;font-weight:normal;">17.36</div><div class="t" style="left:254.78px;top:464.23px;transform-origin:0 0;transform:scaleX(0.9610);font-size:11.3px;color:#0000f4;font-weight:normal;">459</div><div class="t" style="left:230.26px;top:480.23px;transform-origin:0 0;transform:scaleX(0.9577);font-size:11.3px;color:#0000f4;font-weight:normal;">6627135</div><div class="t" style="left:305.88px;top:448.23px;transform-origin:0 0;transform:scaleX(0.9464);font-size:11.3px;color:#0000f4;font-weight:normal;">0.27</div><div class="t" style="left:320.77px;top:464.23px;transform-origin:0 0;transform:scaleX(0.9414);font-size:11.3px;color:#0000f4;font-weight:normal;">9</div><div class="t" style="left:291.16px;top:480.23px;transform-origin:0 0;transform:scaleX(0.9366);font-size:11.3px;color:#0000f4;font-weight:normal;">103704</div><div style="position:absolute;left:395px;top:430px;width:13px;height:13px;background:#EEEEFE;border:1px solid #333;box-sizing:border-box"></div><svg style="position:absolute;left:395px;top:430px" width="13" height="13" viewBox="0 0 13 13"><path d="M2.5 6.5L5 9L10.5 3.5" fill="none" stroke="#333" stroke-width="1.2"/></svg><div class="t" style="left:416.78px;top:432.43px;transform-origin:0 0;transform:scaleX(1.0360);font-size:11.3px;color:#000;font-weight:normal;">Jitter</div><div class="t" style="left:412.16px;top:447.93px;transform-origin:0 0;transform:scaleX(0.9411);font-size:11.3px;color:#0000f4;font-weight:normal;">10.5%</div><div class="t" style="left:412.16px;top:463.93px;transform-origin:0 0;transform:scaleX(0.9411);font-size:11.3px;color:#0000f4;font-weight:normal;">14.6%</div><div class="t" style="left:460.96px;top:436.23px;transform-origin:0 0;transform:scaleX(0.9750);font-size:11.3px;color:#000;font-weight:normal;">Speed</div><div class="t" style="left:519.79px;top:436.23px;transform-origin:0 0;transform:scaleX(0.9209);font-size:11.3px;color:#0000f4;font-weight:normal;">4.18 X</div><div class="t" style="left:460.45px;top:464.23px;transform-origin:0 0;transform:scaleX(1.0553);font-size:11.3px;color:#000;font-weight:normal;">Position</div><div class="t" style="left:519.45px;top:464.23px;transform-origin:0 0;transform:scaleX(0.9779);font-size:11.3px;color:#0000f4;font-weight:normal;">23862 MB</div><div class="t" style="left:460.97px;top:480.23px;transform-origin:0 0;transform:scaleX(0.9520);font-size:11.3px;color:#000;font-weight:normal;">Samples</div><div class="t" style="left:519.67px;top:480.23px;transform-origin:0 0;transform:scaleX(0.9659);font-size:11.3px;color:#0000f4;font-weight:normal;">381508</div><div style="position:absolute;left:575px;top:428px;width:75px;height:21px;background:#E1E1E1;border:1px solid #ADADAD;box-sizing:border-box"></div><div class="t" style="left:578.89px;top:433.43px;transform-origin:0 0;transform:scaleX(0.9242);font-size:11.3px;color:#000;font-weight:normal;">4.0 X</div><svg style="position:absolute;left:636px;top:436px" width="10" height="6" viewBox="0 0 10 6"><path d="M0.5 0.5L5 5L9.5 0.5" fill="none" stroke="#404040" stroke-width="1.1"/></svg><div style="position:absolute;left:576px;top:452px;width:73px;height:21px;background:#E1E1E1;border:1px solid #ADADAD;box-sizing:border-box"></div><div class="t" style="left:590.11px;top:457.83px;transform-origin:0 0;transform:scaleX(1.0746);font-size:11.3px;color:#000;font-weight:normal;">Start full</div><div style="position:absolute;left:575px;top:479px;width:73px;height:21px;background:#E1E1E1;border:1px solid #ADADAD;box-sizing:border-box"></div><div class="t" style="left:587.03px;top:484.83px;transform-origin:0 0;transform:scaleX(1.0294);font-size:11.3px;color:#000;font-weight:normal;">Start part</div><div style="position:absolute;left:1px;top:505px;width:659px;height:18px;background:#F0F0F0"></div><div class="t" style="left:3.69px;top:508.77px;transform-origin:0 0;transform:scaleX(0.9246);font-size:11.5px;color:#000;font-weight:normal;">Test completed</div><div style="position:absolute;left:141px;top:507px;width:1px;height:16px;background:#d8d8d8"></div><div style="position:absolute;left:146px;top:508px;width:302px;height:13px;background:#e6e6e6;border:1px solid #bcbcbc;box-sizing:border-box"></div><div style="position:absolute;left:147px;top:509px;width:300px;height:11px;background:#06b025"></div><div style="position:absolute;left:449px;top:507px;width:1px;height:16px;background:#d8d8d8"></div><div class="t" style="left:454.08px;top:508.93px;transform-origin:0 0;transform:scaleX(0.9112);font-size:11.3px;color:#000;font-weight:normal;">100.0%</div><div style="position:absolute;left:507px;top:507px;width:1px;height:16px;background:#d8d8d8"></div><div class="t" style="left:601.67px;top:508.93px;transform-origin:0 0;transform:scaleX(0.9695);font-size:11.3px;color:#000;font-weight:normal;">33:14</div><div style="position:absolute;left:630px;top:507px;width:1px;height:16px;background:#d8d8d8"></div><div style="position:absolute;left:658px;top:512px;width:2px;height:2px;background:#b0b0b0"></div><div style="position:absolute;left:654px;top:516px;width:2px;height:2px;background:#b0b0b0"></div><div style="position:absolute;left:658px;top:516px;width:2px;height:2px;background:#b0b0b0"></div><div style="position:absolute;left:650px;top:520px;width:2px;height:2px;background:#b0b0b0"></div><div style="position:absolute;left:654px;top:520px;width:2px;height:2px;background:#b0b0b0"></div><div style="position:absolute;left:658px;top:520px;width:2px;height:2px;background:#b0b0b0"></div>
</body></html>
